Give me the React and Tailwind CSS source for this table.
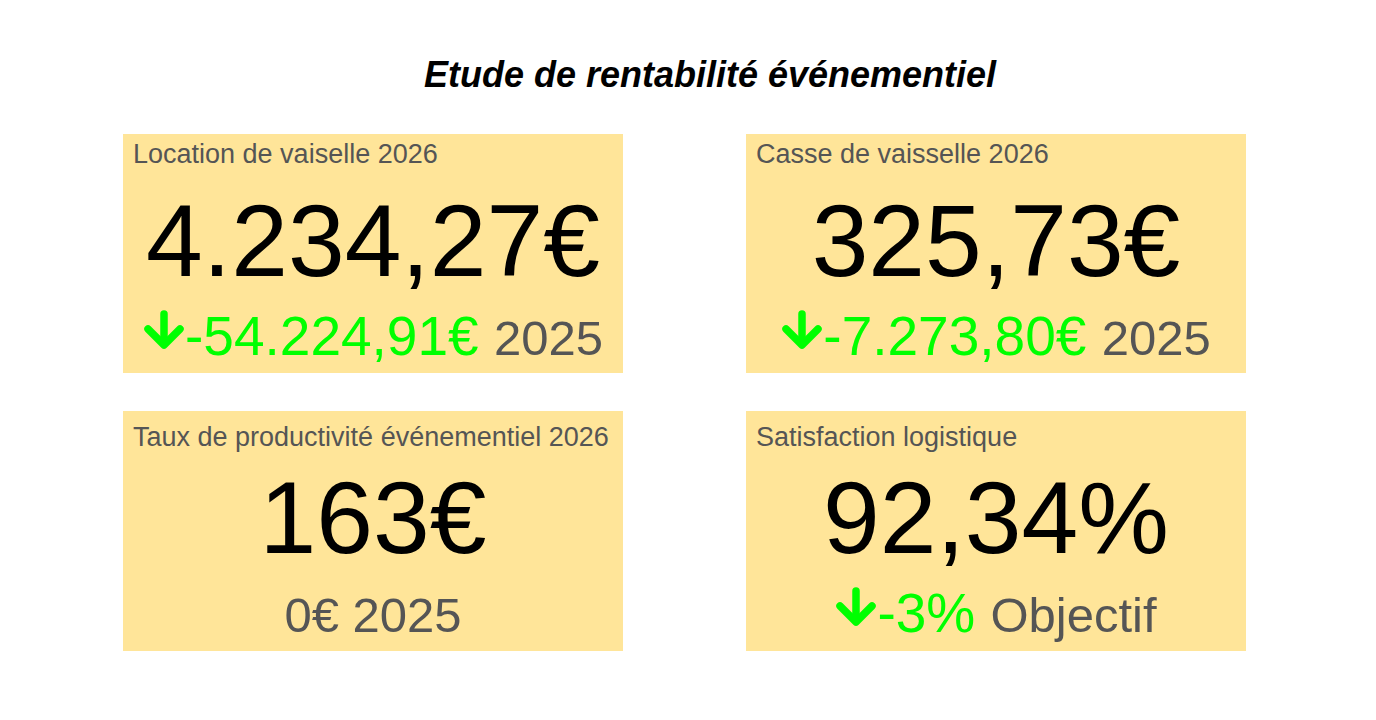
const cards = [
  {
    label: 'Location de vaiselle 2026',
    value: '4.234,27€',
    delta: '-54.224,91€',
    note: '2025',
    top: true,
  },
  {
    label: 'Casse de vaisselle 2026',
    value: '325,73€',
    delta: '-7.273,80€',
    note: '2025',
    top: true,
  },
  {
    label: 'Taux de productivité événementiel 2026',
    value: '163€',
    plain: '0€',
    note: '2025',
  },
  {
    label: 'Satisfaction logistique',
    value: '92,34%',
    delta: '-3%',
    note: 'Objectif',
  },
];

function ArrowDown() {
  return (
    <svg
      width="42"
      height="39"
      viewBox="0 0 42 39"
      className="inline-block align-[6px]"
      fill="none"
      stroke="#00ff00"
      strokeWidth="7.5"
      strokeLinecap="round"
      strokeLinejoin="round"
    >
      <path d="M21 4v30" />
      <path d="M5 19l16 16 16-16" />
    </svg>
  );
}

function Scorecard({ card }) {
  return (
    <div
      className={`bg-[#ffe599] w-[500px] overflow-hidden flex flex-col ${
        card.top ? 'h-[239px]' : 'h-[240px]'
      }`}
    >
      <div className={`h-[55px] px-[10px] ${card.top ? 'pt-[5px]' : 'pt-[11px]'}`}>
        <div className="text-[27px] leading-[30px] text-[#555555] whitespace-nowrap">
          {card.label}
        </div>
      </div>
      <div className="mt-[1px] text-center text-[102px] leading-none text-black whitespace-nowrap">
        {card.value}
      </div>
      <div className="mt-[16px] text-center text-[55px] leading-[56px] whitespace-nowrap">
        {card.delta && (
          <>
            <ArrowDown />
            <span className="text-[#00ff00]">{card.delta}</span>{' '}
          </>
        )}
        {card.plain && (
          <span className="text-[49px] leading-none text-[#555555]">{card.plain} </span>
        )}
        <span className="text-[49px] leading-none text-[#555555]">{card.note}</span>
      </div>
    </div>
  );
}

export default function App() {
  return (
    <div className="w-[1376px] h-[720px] bg-white font-['Liberation_Sans',Arial,sans-serif]">
      <h1 className="pt-[55px] pl-[44px] text-center text-[36px] leading-[40px] font-bold italic text-black">
        Etude de rentabilité événementiel
      </h1>
      <div className="mt-[39px] ml-[123px] grid grid-cols-[500px_500px] gap-x-[123px] gap-y-[38px]">
        {cards.map((card) => (
          <Scorecard key={card.label} card={card} />
        ))}
      </div>
    </div>
  );
}
